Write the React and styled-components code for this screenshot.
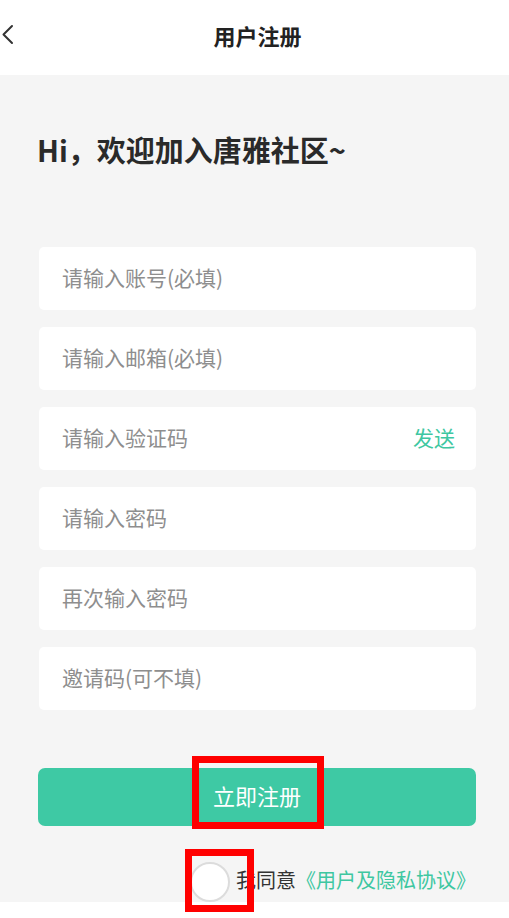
import React from "react";
import styled, { createGlobalStyle } from "styled-components";

const Global = createGlobalStyle`
  html, body { margin: 0; padding: 0; background: #ffffff; }
  body { font-family: "Noto Sans CJK SC", "Noto Sans", sans-serif; }
  * { box-sizing: border-box; }
`;

const Page = styled.div`
  position: relative;
  width: 509px;
  height: 918px;
  background: #ffffff;
  overflow: hidden;
`;

const Header = styled.header`
  height: 75px;
  display: grid;
  grid-template-columns: 1fr auto 1fr;
  align-items: center;
  padding: 0 0 5px 6px;
  background: #ffffff;
`;

const BackButton = styled.button`
  justify-self: start;
  margin-left: -6px;
  padding: 0;
  border: 0;
  background: none;
  width: 20px;
  height: 24px;
  display: flex;
  align-items: center;
  color: #333;
`;

const Title = styled.h1`
  margin: 0;
  font-size: 22px;
  font-weight: 700;
  color: #222;
  line-height: 1;
`;

const Main = styled.main`
  background: #f5f5f5;
  padding: 59px 33px 0 39px;
  height: 827px;
  display: flex;
  flex-direction: column;
`;

const Welcome = styled.h2`
  margin: 0 0 0 -2px;
  font-size: 29px;
  line-height: 30px;
  font-weight: 700;
  color: #2a2a2a;
  letter-spacing: 0;
`;

const Form = styled.div`
  margin-top: 83px;
  display: flex;
  flex-direction: column;
  gap: 17px;
`;

const Field = styled.div`
  height: 63px;
  background: #ffffff;
  border-radius: 5px;
  display: flex;
  align-items: center;
  justify-content: space-between;
  padding: 0 21px 2px 23px;
`;

const Placeholder = styled.span`
  font-size: 21px;
  color: #8e8e8e;
  line-height: 1;
`;

const SendLink = styled.span`
  font-size: 21px;
  color: #3ec7a1;
  line-height: 1;
`;

const Submit = styled.button`
  margin-top: 58px;
  margin-left: -1px;
  height: 58px;
  padding: 0 0 4px;
  border: 0;
  border-radius: 7px;
  background: #3ec9a4;
  color: #ffffff;
  font-family: inherit;
  font-size: 22px;
  line-height: 1;
`;

const AgreeRow = styled.div`
  margin-top: 36px;
  height: 40px;
  display: flex;
  align-items: center;
  justify-content: flex-end;
  gap: 6px;
`;

const Radio = styled.span`
  width: 40px;
  height: 40px;
  border-radius: 50%;
  background: #ffffff;
  border: 2px solid #dcdcdc;
  flex: none;
`;

const AgreeText = styled.span`
  font-size: 20px;
  color: #333;
  line-height: 1;
  margin-top: -4px;
`;

const AgreeLink = styled.span`
  color: #3ec7a1;
`;

const Highlight = styled.div`
  position: absolute;
  border: 7px solid #ff0000;
  pointer-events: none;
`;

const Chevron = () => (
  <svg width="20" height="24" viewBox="0 0 20 24" fill="none">
    <path d="M12 3 L3.5 11.5 L12 20" stroke="#333" strokeWidth="2" strokeLinecap="round" strokeLinejoin="round" />
  </svg>
);

const fields = [
  { label: "请输入账号(必填)" },
  { label: "请输入邮箱(必填)" },
  { label: "请输入验证码", action: "发送" },
  { label: "请输入密码" },
  { label: "再次输入密码" },
  { label: "邀请码(可不填)" },
];

export default function App() {
  return (
    <Page>
      <Global />
      <Header>
        <BackButton aria-label="返回">
          <Chevron />
        </BackButton>
        <Title>用户注册</Title>
        <span />
      </Header>
      <Main>
        <Welcome>Hi，欢迎加入唐雅社区~</Welcome>
        <Form>
          {fields.map((f) => (
            <Field key={f.label}>
              <Placeholder>{f.label}</Placeholder>
              {f.action && <SendLink>{f.action}</SendLink>}
            </Field>
          ))}
        </Form>
        <Submit>立即注册</Submit>
        <AgreeRow>
          <Radio />
          <AgreeText>
            我同意<AgreeLink>《用户及隐私协议》</AgreeLink>
          </AgreeText>
        </AgreeRow>
      </Main>
      <Highlight style={{ left: 192, top: 756, width: 132, height: 73 }} />
      <Highlight style={{ left: 185, top: 849, width: 69, height: 63 }} />
    </Page>
  );
}
